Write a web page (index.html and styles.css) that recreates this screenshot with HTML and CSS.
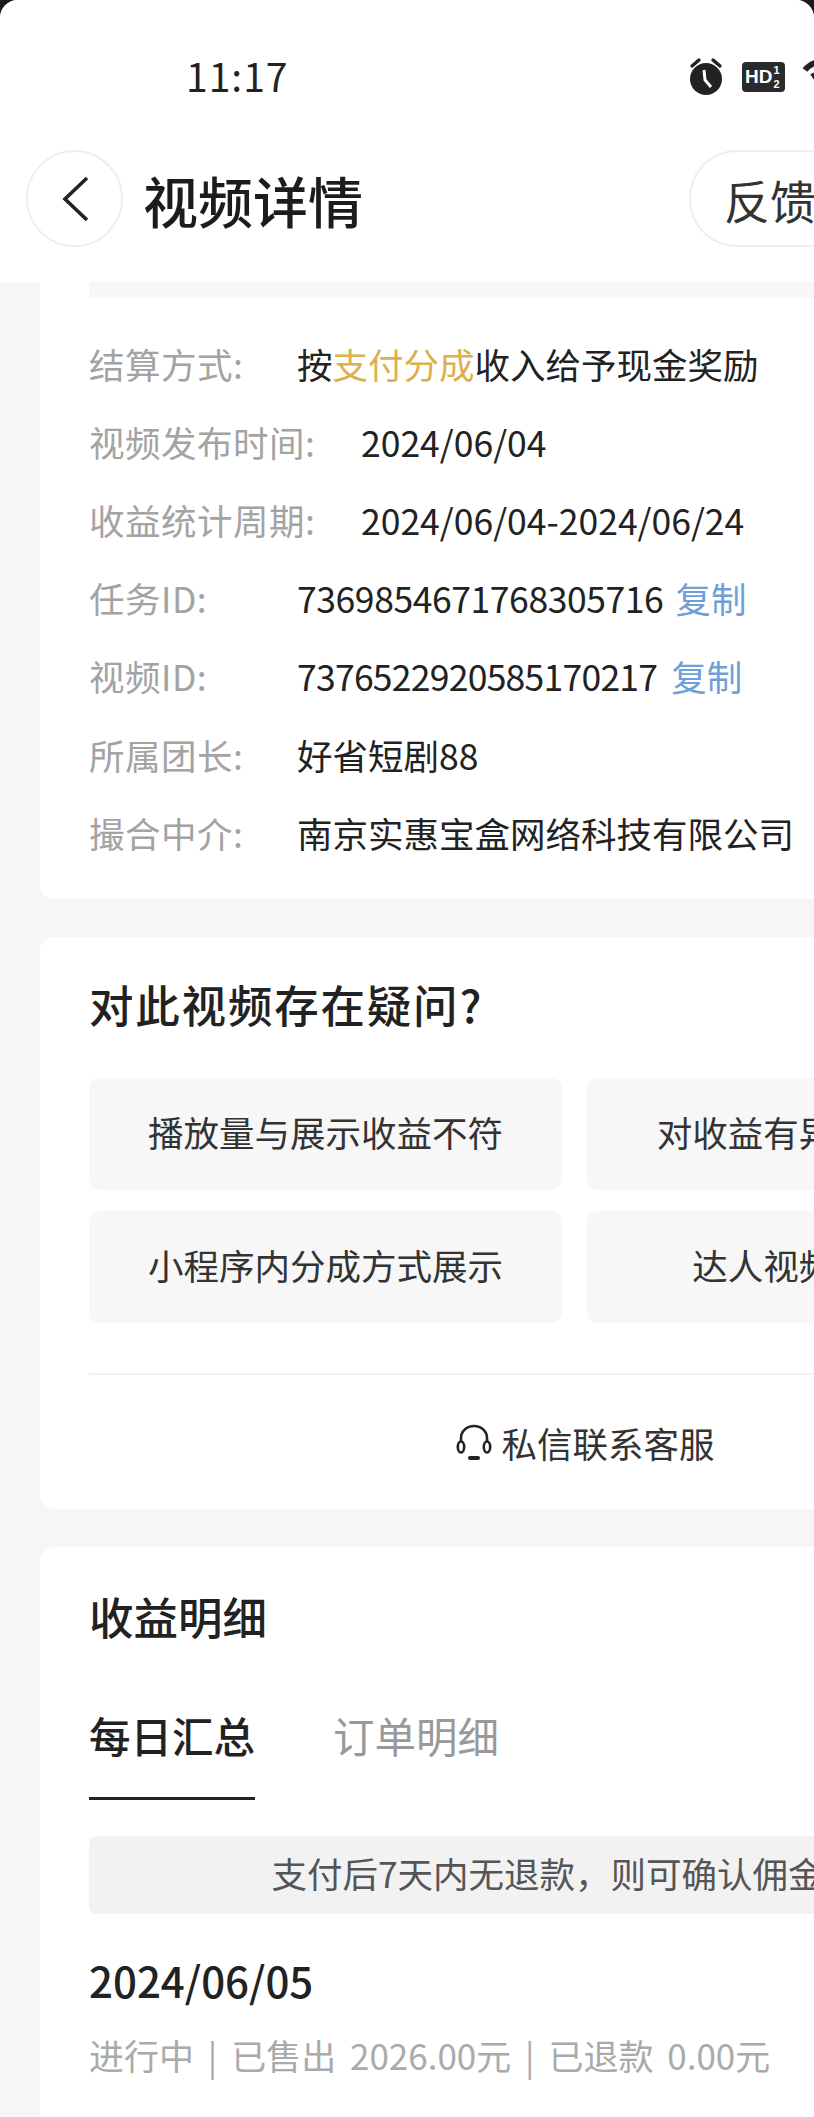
FILE: index.html
```html
<!DOCTYPE html>
<html lang="zh-CN">
<head>
    <meta charset="UTF-8">
    <meta name="viewport" content="width=device-width, initial-scale=1.0">
    <title>视频详情</title>
    <link rel="stylesheet" href="styles.css">
</head>
<body>
    <div class="screen">
        <!-- Status bar and title bar -->
        <header class="header">
            <div class="status">
                <span class="time">11:17</span>
                <div class="status-icons">
                    <svg class="alarm" width="40" height="40" viewBox="0 0 40 40">
                        <path d="M6 9 L13 3 M34 9 L27 3" stroke="#222" stroke-width="3.4" stroke-linecap="round"/>
                        <circle cx="20" cy="22" r="16" fill="#222"/>
                        <path d="M18 13 L19 23 L25 30" stroke="#fff" stroke-width="3" fill="none"/>
                    </svg>
                    <div class="hd">HD<span class="hd-sub"><i>1</i><i>2</i></span></div>
                    <svg class="wifi" width="30" height="40" viewBox="0 0 30 40">
                        <path d="M4 13 Q8 8 14 6 M11 20 L14 18" stroke="#222" stroke-width="6" fill="none"/>
                    </svg>
                </div>
            </div>
            <div class="titlebar">
                <button class="back">
                    <svg width="30" height="46" viewBox="0 0 30 46">
                        <path d="M27 2 L5 23 L27 44" fill="none" stroke="#222" stroke-width="3.6"/>
                    </svg>
                </button>
                <h1>视频详情</h1>
                <button class="feedback">反馈</button>
            </div>
        </header>

        <main class="content">
            <!-- Video info -->
            <section class="card info-card">
                <div class="info-top"></div>
                <div class="row">
                    <span class="label">结算方式:</span>
                    <span class="value">按<span class="accent">支付分成</span>收入给予现金奖励</span>
                </div>
                <div class="row">
                    <span class="label label-wide">视频发布时间:</span>
                    <span class="value">2024/06/04</span>
                </div>
                <div class="row">
                    <span class="label label-wide">收益统计周期:</span>
                    <span class="value">2024/06/04-2024/06/24</span>
                </div>
                <div class="row">
                    <span class="label">任务ID:</span>
                    <span class="value value-tight">7369854671768305716</span>
                    <a class="copy">复制</a>
                </div>
                <div class="row">
                    <span class="label">视频ID:</span>
                    <span class="value value-tighter">7376522920585170217</span>
                    <a class="copy">复制</a>
                </div>
                <div class="row">
                    <span class="label">所属团长:</span>
                    <span class="value">好省短剧88</span>
                </div>
                <div class="row">
                    <span class="label">撮合中介:</span>
                    <span class="value">南京实惠宝盒网络科技有限公司</span>
                </div>
            </section>

            <!-- Questions -->
            <section class="card question-card">
                <h2>对此视频存在疑问?</h2>
                <div class="options">
                    <div class="option">播放量与展示收益不符</div>
                    <div class="option">对收益有异议或疑问</div>
                    <div class="option">小程序内分成方式展示</div>
                    <div class="option">达人视频未展示</div>
                </div>
                <div class="contact">
                    <svg width="38" height="38" viewBox="0 0 38 38">
                        <path d="M6 18 V15 C6 8 12 3 19 3 C26 3 32 8 32 15 V18" fill="none" stroke="#222" stroke-width="2.6"/>
                        <ellipse cx="6" cy="24" rx="3.2" ry="5.5" fill="none" stroke="#222" stroke-width="2.6"/>
                        <ellipse cx="32" cy="24" rx="3.2" ry="5.5" fill="none" stroke="#222" stroke-width="2.6"/>
                        <path d="M15 35 H23" stroke="#222" stroke-width="4" stroke-linecap="round"/>
                    </svg>
                    <span>私信联系客服</span>
                </div>
            </section>

            <!-- Income details -->
            <section class="card detail-card">
                <h2>收益明细</h2>
                <div class="tabs">
                    <div class="tab tab-active">每日汇总</div>
                    <div class="tab">订单明细</div>
                </div>
                <div class="tip">支付后7天内无退款，则可确认佣金收入</div>
                <div class="date">2024/06/05</div>
                <div class="summary">进行中 | 已售出 2026.00元 | 已退款 0.00元</div>
            </section>
        </main>
    </div>
</body>
</html>
```

FILE: styles.css
```css
html, body {
    margin: 0;
    padding: 0;
    background-color: #1a1a1a;
}
.screen {
    width: 814px;
    height: 2117px;
    overflow: hidden;
    background-color: #f6f6f6;
    border-radius: 18px 18px 0 0;
    font-family: "Noto Sans CJK SC", "Liberation Sans", sans-serif;
    font-size: 35.5px;
    color: #222;
}

/* Header */
.header {
    height: 282px;
    background-color: #fff;
    box-sizing: border-box;
    padding-top: 52px;
}
.status {
    height: 50px;
    display: flex;
    align-items: center;
    padding-left: 186px;
}
.time {
    font-size: 39px;
    letter-spacing: 1px;
    line-height: 50px;
    margin-top: -4px;
}
.status-icons {
    margin-left: auto;
    display: flex;
    align-items: center;
    width: 128px;
    gap: 16px;
    flex-shrink: 0;
}
.alarm, .wifi {
    flex-shrink: 0;
}
.hd {
    flex-shrink: 0;
    width: 43px;
    height: 30px;
    box-sizing: border-box;
    background-color: #2a2a2a;
    border-radius: 4px;
    color: #fff;
    font-family: "Liberation Sans", sans-serif;
    font-weight: bold;
    font-size: 19px;
    line-height: 30px;
    padding-left: 3px;
    display: flex;
}
.hd-sub {
    display: flex;
    flex-direction: column;
    font-size: 11px;
    line-height: 14px;
    padding: 1px 0 0 1px;
}
.hd-sub i {
    font-style: normal;
}
.titlebar {
    display: flex;
    align-items: center;
    height: 97px;
    margin-top: 48px;
    padding-left: 26px;
}
.back {
    width: 97px;
    height: 97px;
    flex-shrink: 0;
    border-radius: 50%;
    border: 2px solid #eee;
    background-color: #fff;
    padding: 0;
    display: flex;
    align-items: center;
    justify-content: center;
}
h1 {
    margin: 0 0 0 20px;
    font-size: 55px;
    font-weight: 500;
    color: #1c1c1c;
}
.feedback {
    margin-left: auto;
    width: 125px;
    height: 97px;
    flex-shrink: 0;
    box-sizing: border-box;
    border: 2px solid #eee;
    border-right: none;
    border-radius: 48px 0 0 48px;
    background-color: #fff;
    font-family: inherit;
    font-size: 46px;
    color: #333;
    text-align: left;
    padding: 0 0 0 33px;
    white-space: nowrap;
}

/* Cards */
.content {
    padding-left: 40px;
    width: 1130px;
    display: flex;
    flex-direction: column;
    gap: 38px;
}
.card {
    width: 1090px;
    box-sizing: border-box;
    background-color: #fff;
    border-radius: 14px;
    padding: 0 49px;
}
.info-card {
    height: 617px;
    border-radius: 0 0 14px 14px;
}
.info-top {
    height: 16px;
    background-color: #f7f7f7;
    margin-bottom: 26px;
}
.row {
    display: flex;
    align-items: center;
    height: 78.2px;
    white-space: nowrap;
}
.label {
    width: 208px;
    color: #a3a3a3;
    flex-shrink: 0;
    letter-spacing: 0.5px;
}
.label-wide {
    width: 272px;
}
.value {
    color: #222;
}
.value-tight {
    letter-spacing: -0.42px;
    margin-right: -2px;
}
.value-tighter {
    letter-spacing: -0.74px;
}
.accent {
    color: #dcb04e;
}
.copy {
    color: #6f9fd8;
    margin-left: 14px;
}
h2 {
    margin: 0;
    font-size: 44.5px;
    font-weight: 500;
    color: #222;
}
.question-card {
    height: 572px;
    padding-top: 34px;
}
.question-card h2 {
    letter-spacing: 1.8px;
}
.options {
    display: grid;
    grid-template-columns: 473px 459px;
    gap: 21px 25px;
    margin-top: 42px;
    padding-bottom: 50px;
    border-bottom: 2px solid #f1f1f1;
}
.option {
    height: 112px;
    box-sizing: border-box;
    padding-bottom: 6px;
    background-color: #f7f7f7;
    border-radius: 10px;
    display: flex;
    align-items: center;
    justify-content: center;
    color: #333;
    white-space: nowrap;
}
.contact {
    display: flex;
    align-items: center;
    justify-content: center;
    gap: 8px;
    height: 134px;
    color: #333;
}
.detail-card {
    height: 600px;
    padding-top: 36px;
}
.tabs {
    display: flex;
    gap: 78px;
    margin-top: 57px;
}
.tab {
    font-size: 41.5px;
    color: #999;
    padding-bottom: 32px;
    border-bottom: 3px solid transparent;
}
.tab-active {
    color: #222;
    font-weight: 500;
    border-bottom-color: #222;
}
.tip {
    margin-top: 36px;
    height: 78px;
    box-sizing: border-box;
    padding: 0 4px 6px 0;
    background-color: #f2f2f2;
    border-radius: 8px;
    display: flex;
    align-items: center;
    justify-content: center;
    color: #555;
    white-space: nowrap;
}
.date {
    margin-top: 35px;
    font-size: 42px;
    font-weight: 500;
    color: #222;
}
.summary {
    margin-top: 19px;
    color: #aaa;
    font-size: 35px;
    word-spacing: 6px;
    white-space: nowrap;
}
```
